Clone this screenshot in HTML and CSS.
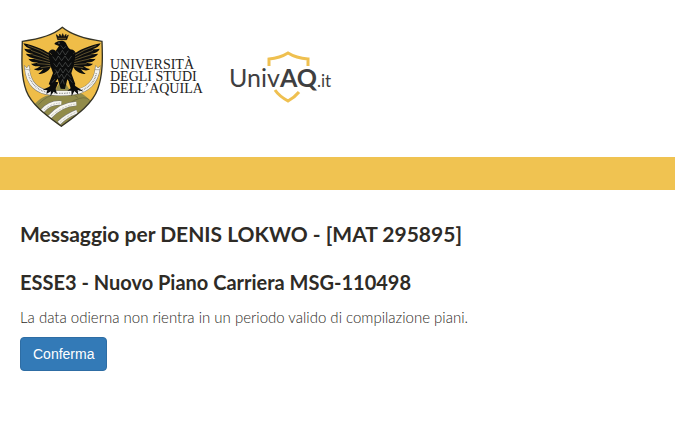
FILE: index.html
```
<!DOCTYPE html>
<html lang="it">
<head>
<meta charset="utf-8">
<meta name="viewport" content="width=device-width, initial-scale=1">
<title>ESSE3 - Messaggio</title>
<link rel="stylesheet" href="styles.css">
</head>
<body>
<header class="header">
  <div class="brand">
    <svg class="crest" viewBox="18 18 246 303" aria-hidden="true">
      <defs>
        <clipPath id="shield"><path d="M142 22C119 42 78 57 22 64C20 120 18 170 34 213C51 257 100 290 139 319C190 282 233 250 248 208C264 165 263 115 261 64C209 57 166 42 142 22Z"/></clipPath>
        <g id="wing">
          <path d="M122 92C112 84 104 90 100 98C85 89 55 75 25 70C29 79 38 84 50 88C43 88 34 87 28 86C32 96 43 100 56 102C47 103 39 102 33 101C38 111 50 114 62 115C54 117 46 117 40 116C46 126 58 128 69 127C61 131 53 132 48 131C55 140 66 140 76 138C70 144 62 147 57 147C65 154 77 151 85 147C80 154 74 159 70 161C80 164 92 158 101 150C108 142 114 126 120 116Z" fill="#0c0d0d"/>
          <path d="M38 77Q76 89 102 106M48 91Q78 101 102 114M52 104Q80 112 104 121M59 117Q82 122 105 128M67 131Q88 132 107 134M77 143Q94 141 109 138M104 98L118 112" fill="none" stroke="#a68b49" stroke-width="1.6"/>
        </g>
      </defs>
      <g clip-path="url(#shield)">
        <path fill="#efbd48" d="M18 18H265V322H18Z"/>
        <path fill="#918b49" d="M54 258C75 232 100 222 118 224C124 198 134 187 143 187C153 187 157 200 165 211C191 211 211 226 230 245L139 323Z"/>
        <path d="M70 254Q97 224 123 224M116 286Q145 259 178 241Q211 226 223 240M147 222Q171 217 189 233" fill="none" stroke="#69663b" stroke-width="2"/>
        <g fill="none" stroke="#777" stroke-width="14">
          <path d="M82 273Q105 246 139 249"/><path d="M103 292Q139 253 184 251"/><path d="M132 309Q153 288 186 275"/>
        </g>
        <g fill="none" stroke="#f8f7ef" stroke-width="11">
          <path d="M82 273Q105 246 139 249"/><path d="M103 292Q139 253 184 251"/><path d="M132 309Q153 288 186 275"/>
        </g>
        <g fill="none" stroke="#999" stroke-width="3" stroke-dasharray="2 3">
          <path d="M88 269Q111 249 138 249"/><path d="M108 288Q144 257 182 252"/><path d="M136 306Q158 287 184 276"/>
        </g>
      </g>
      <use href="#wing"/>
      <use href="#wing" transform="translate(282 0) scale(-1 1)"/>
      <path fill="none" stroke="#807d74" stroke-width="16" d="M36 145C40 190 66 215 107 218Q142 222 176 217C218 212 243 185 248 145"/>
      <path fill="none" stroke="#f5f4ef" stroke-width="13" d="M36 145C40 190 66 215 107 218Q142 222 176 217C218 212 243 185 248 145"/>
      <path fill="none" stroke="#777" stroke-width="4" stroke-dasharray="2 3" d="M40 161C47 191 68 212 98 217M117 219Q142 222 166 218M188 214C217 207 238 190 244 160"/>
      <path fill="#f5f4ef" stroke="#6a685f" stroke-width="1.5" d="M29 147L28 136L35 144L42 135L45 150ZM240 149L242 136L249 144L256 137L255 149Z"/>
      <path fill="#0b0c0c" d="M119 69Q130 61 142 62Q153 64 156 76Q158 84 171 92L180 108Q179 136 169 160L181 193L171 199L157 178L150 207L137 206L128 176L113 198L101 193L114 159Q102 131 105 109L122 93L132 78L119 73Z"/>
      <path fill="#0b0c0c" d="M113 184L103 200L83 209L97 211L94 222L108 214L106 229L116 215L126 222L122 207L130 187ZM161 185L167 205L157 212L169 212L170 229L178 213L190 224L188 210L207 215L181 198L173 182Z"/>
      <path fill="#111" stroke="#111" stroke-width="2" d="M128 59L124 44L132 51L134 42L140 50L143 41L147 50L153 43L153 51L160 45L155 59Z"/>
      <path d="M130 55H153" stroke="#a87d2c" stroke-width="2"/>
      <path fill="none" stroke="#686c6b" stroke-width="1.5" d="M137 76L145 86L153 79M126 94L134 105L142 91L151 105L160 92M113 110L122 122L130 108L140 122L150 108L160 122L170 108M116 130L125 141L133 127L142 141L151 127L160 141L169 128M120 148L129 159L136 145L144 159L152 146L161 158L168 146M118 165L125 155L132 173L140 162L147 176L156 161L168 173M111 188L120 177M172 188L163 176M137 191L143 178L148 193"/>
      <circle cx="132" cy="69" r="1.6" fill="#ddd"/>
      <path fill="none" stroke="#343326" stroke-width="4" d="M142 22C119 42 78 57 22 64C20 120 18 170 34 213C51 257 100 290 139 319C190 282 233 250 248 208C264 165 263 115 261 64C209 57 166 42 142 22Z"/>
    </svg>
    <div class="university">
      <span>UNIVERSITÀ</span>
      <span>DEGLI STUDI</span>
      <span>DELL’AQUILA</span>
    </div>
  </div>
  <svg class="portal" viewBox="0 0 104 56" role="img" aria-label="UnivAQ.it">
    <path class="portal-shield" d="M40 17V10Q51 9 59 4Q67 9 79 10V17M46 41Q50 47 59 52Q66 48 70 43"/>
    <text class="portal-text" x="0" y="38">Univ<tspan class="portal-bold">AQ</tspan><tspan class="portal-small">.it</tspan></text>
  </svg>
</header>
<div class="band"></div>
<main class="content">
  <h1>Messaggio per DENIS LOKWO - [MAT 295895]</h1>
  <h2>ESSE3 - Nuovo Piano Carriera MSG-110498</h2>
  <p>La data odierna non rientra in un periodo valido di compilazione piani.</p>
  <button class="confirm" type="button">Conferma</button>
</main>
</body>
</html>
```
FILE: styles.css
```
* {
  box-sizing: border-box;
}

body {
  margin: 0;
  background: #fff;
  color: #2e2b26;
  font-family: Lato, sans-serif;
  font-size: 15px;
  line-height: 20px;
}

.header {
  display: flex;
  align-items: flex-start;
  gap: 26px;
  padding: 26px 21px 30px;
}

.brand {
  display: flex;
  align-items: center;
  gap: 7px;
}

.crest {
  display: block;
  width: 82px;
  height: 101px;
}

.university {
  display: flex;
  flex-direction: column;
  color: #222;
  font-family: "Liberation Serif", serif;
  font-size: 14px;
  line-height: 12px;
  white-space: nowrap;
}

.portal {
  width: 104px;
  height: 56px;
  margin-top: 23px;
}

.portal-shield {
  fill: none;
  stroke: #efc050;
  stroke-width: 3px;
}

.portal-text {
  fill: #3f3f41;
  font-family: Lato, sans-serif;
  font-size: 25px;
}

.portal-bold {
  font-weight: 700;
}

.portal-small {
  font-size: 17px;
}

.band {
  height: 33px;
  background: #f0c351;
}

.content {
  padding: 32px 20px;
}

h1,
h2 {
  margin: 0 0 24px;
  font-weight: 700;
}

h1 {
  font-size: 21px;
  line-height: 24px;
}

h2 {
  margin-bottom: 13px;
  font-size: 20px;
  line-height: 24px;
}

p {
  margin: 0 0 10px;
  font-weight: 300;
}

.confirm {
  padding: 6px 12px;
  border: 1px solid #2e6da4;
  border-radius: 4px;
  background: #337ab7;
  color: #fff;
  font-family: "Liberation Sans", sans-serif;
  font-size: 14px;
  line-height: 20px;
}
```
